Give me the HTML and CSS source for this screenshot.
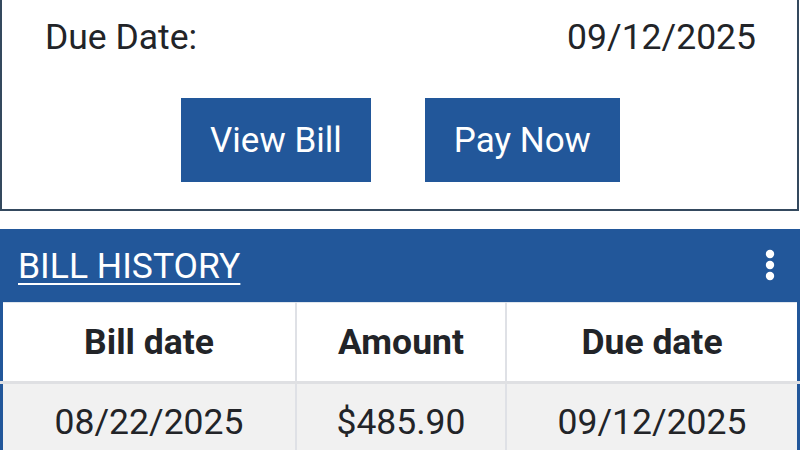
FILE: index.html
```html
<!DOCTYPE html>
<html>
<head>
<meta charset="utf-8">
<link rel="stylesheet" href="styles.css">
</head>
<body>
<div class="page">
  <section class="card">
    <div class="due-row">
      <span class="label">Due Date:</span>
      <span class="value">09/12/2025</span>
    </div>
    <div class="actions">
      <button class="btn">View Bill</button>
      <button class="btn">Pay Now</button>
    </div>
  </section>
  <section class="history">
    <div class="history-head">
      <a class="history-title" href="#">BILL HISTORY</a>
      <span class="kebab" aria-label="More">
        <svg width="10" height="32" viewBox="0 0 10 32"><circle cx="5" cy="5" r="4.2" fill="#fff"/><circle cx="5" cy="16" r="4.2" fill="#fff"/><circle cx="5" cy="27" r="4.2" fill="#fff"/></svg>
      </span>
    </div>
    <table class="bills">
      <thead>
        <tr><th>Bill date</th><th>Amount</th><th>Due date</th></tr>
      </thead>
      <tbody>
        <tr><td>08/22/2025</td><td>$485.90</td><td>09/12/2025</td></tr>
      </tbody>
    </table>
  </section>
</div>
</body>
</html>
```

FILE: styles.css
```css
html, body {
  margin: 0;
  padding: 0;
  background: #ffffff;
}
body {
  width: 800px;
  height: 450px;
  overflow: hidden;
  font-family: Roboto, "Liberation Sans", sans-serif;
  color: #222428;
}
.page {
  display: flex;
  flex-direction: column;
}
.card {
  width: 799px;
  box-sizing: border-box;
  border: 2px solid #34495e;
  border-top: none;
  height: 211px;
  padding: 15px 41px 0 43px;
  display: flex;
  flex-direction: column;
}
.due-row {
  display: flex;
  justify-content: space-between;
  font-size: 35.5px;
  line-height: 44px;
}
.actions {
  display: flex;
  justify-content: center;
  gap: 54px;
  margin-top: 39px;
  padding-left: 0;
}
.btn {
  background: #22579a;
  color: #ffffff;
  border: none;
  font-family: Roboto, "Liberation Sans", sans-serif;
  font-size: 35px;
  height: 84px;
  padding: 0 29px;
  margin: 0;
}
.history {
  margin-top: 18px;
}
.history-head {
  background: #22579a;
  height: 73px;
  display: flex;
  align-items: center;
  justify-content: space-between;
  padding: 0 25px 0 18px;
}
.history-title {
  color: #ffffff;
  font-size: 35.5px;
  text-decoration: underline;
  text-decoration-thickness: 2px;
  text-underline-offset: 5px;
}
.kebab {
  display: flex;
  margin-top: -2px;
}
.bills {
  width: 800px;
  border-collapse: collapse;
  border-left: 3px solid #22579a;
  border-right: 3px solid #22579a;
  table-layout: fixed;
}
.bills th, .bills td {
  text-align: center;
  font-size: 35.5px;
  border-left: 2px solid #dfe1e6;
}
.bills th:first-child, .bills td:first-child {
  border-left: none;
}
.bills th:nth-child(1) { width: 292px; }
.bills th:nth-child(2) { width: 208px; }
.bills th {
  background: #ffffff;
  font-weight: 700;
  height: 78px;
  border-top: 1px solid #dfe6ee;
  border-bottom: 3px solid #dfe0e3;
  padding: 0;
}
.bills td {
  background: #f1f1f1;
  height: 76px;
  padding: 0;
  font-weight: 400;
}
```
